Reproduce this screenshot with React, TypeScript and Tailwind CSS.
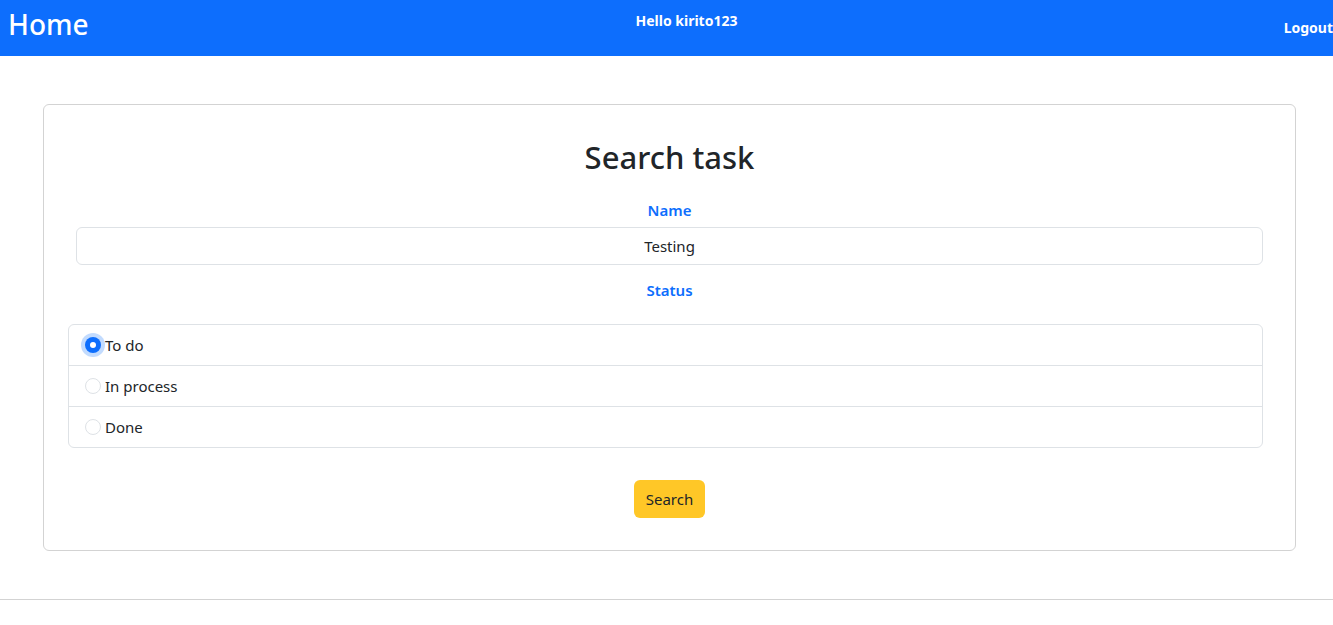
import React, { useState } from "react";

const statuses = ["To do", "In process", "Done"];

const App = () => {
  const [name, setName] = useState<string>("Testing");
  const [status, setStatus] = useState<string>("To do");

  return (
    <div className="min-h-screen bg-white text-[#212529] font-['Noto_Sans',sans-serif]">
      {/* Navbar */}
      <nav className="h-14 bg-[#0d6efd] flex items-start text-white">
        <div className="w-1/3 pl-2 pt-[5px]">
          <span className="text-[28px] font-medium leading-[38px]">Home</span>
        </div>
        <div className="w-1/3 text-center pt-[8px] pl-10">
          <span className="text-[14px] font-bold">Hello kirito123</span>
        </div>
        <div className="w-1/3 text-right pt-[15px]">
          <span className="text-[14px] font-bold">Logout</span>
        </div>
      </nav>

      {/* Search card */}
      <div className="pl-[43px] pr-[37px] pt-12 pb-12">
        <div className="border border-[#d3d3d3] rounded-md px-6 pt-[32px] pb-8">
          <h1 className="text-center text-[31px] font-medium leading-10 mb-[22px]">
            Search task
          </h1>

          <div className="px-2">
            <label className="block text-center text-[15px] font-semibold text-[#0d6efd] mb-[5px]">
              Name
            </label>
            <input
              type="text"
              value={name}
              onChange={(e) => setName(e.target.value)}
              className="block w-full h-[38px] border border-[#dee2e6] rounded-md text-center text-[15px] focus:outline-none"
            />
            <label className="block text-center text-[15px] font-semibold text-[#0d6efd] mt-[14px]">
              Status
            </label>
          </div>

          <ul className="mt-[23px] mr-2 border border-[#dee2e6] rounded-md">
            {statuses.map((s, i) => (
              <li
                key={s}
                className={
                  "flex items-center pl-4 text-[15px] " +
                  (i > 0 ? "h-[41px] border-t border-[#dee2e6]" : "h-10")
                }
              >
                <label className="flex items-center cursor-pointer">
                  <span
                    className={
                      status === s
                        ? "w-4 h-4 rounded-full bg-[#0d6efd] flex items-center justify-center ring-4 ring-[#0d6efd]/25"
                        : "w-4 h-4 rounded-full border border-[#dee2e6] bg-white"
                    }
                  >
                    {status === s && <span className="w-1.5 h-1.5 rounded-full bg-white" />}
                  </span>
                  <input
                    type="radio"
                    name="status"
                    className="hidden"
                    checked={status === s}
                    onChange={() => setStatus(s)}
                  />
                  <span className="ml-1">{s}</span>
                </label>
              </li>
            ))}
          </ul>

          <div className="flex justify-center mt-8">
            <button
              type="submit"
              className="bg-[#ffc727] rounded-md h-[38px] px-3 text-[15px] text-[#212529]"
            >
              Search
            </button>
          </div>
        </div>
      </div>

      <hr className="border-t border-[#d3d3d3]" />
    </div>
  );
};

export default App;
